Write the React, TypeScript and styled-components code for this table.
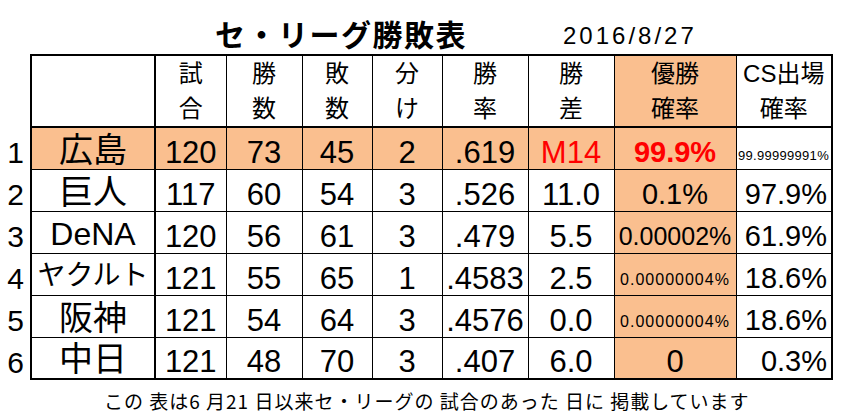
import * as React from 'react';
import styled, { createGlobalStyle } from 'styled-components';

const ORANGE = '#FABF8F';
const LATIN = '"Liberation Sans", "Noto Sans CJK JP", sans-serif';
const CJK = '"Noto Sans CJK JP", "Liberation Sans", sans-serif';

const GlobalStyle = createGlobalStyle`
  html, body {
    margin: 0;
    padding: 0;
    background: #fff;
  }
  body {
    font-family: ${LATIN};
    color: #000;
  }
`;

const Page = styled.div`
  display: flex;
  flex-direction: column;
  width: 843px;
  height: 417px;
  overflow: hidden;
  background: #fff;
`;

const TitleBar = styled.div`
  display: flex;
  align-items: flex-end;
  height: 54px;
  box-sizing: border-box;
  padding: 0 0 4px 215px;
`;

const Title = styled.h1`
  margin: 0;
  font-family: ${CJK};
  font-weight: 700;
  font-size: 30px;
  line-height: 34px;
  letter-spacing: 1.5px;
`;

const DateText = styled.span`
  margin-left: 96px;
  font-size: 24px;
  line-height: 28px;
  letter-spacing: 3px;
`;

const Standings = styled.table`
  border-collapse: collapse;
  table-layout: fixed;
  width: 832px;
`;

const HeadCell = styled.th<{ $hl?: boolean; $thick?: boolean }>`
  height: 70px;
  padding: 0;
  border: 1px solid #000;
  border-top-width: 2px;
  border-bottom-width: 2px;
  ${p => (p.$thick ? 'border-left-width: 2px; border-right-width: 2px;' : '')}
  &:last-child {
    border-right-width: 2px;
  }
  background: ${p => (p.$hl ? ORANGE : '#fff')};
  font-family: ${LATIN};
  font-weight: 400;
  font-size: 24px;
  line-height: 35px;
  text-align: center;
  vertical-align: middle;
`;

const Blank = styled.th`
  border: none;
  padding: 0;
`;

const Rank = styled.td`
  border: none;
  padding: 8px 6px 0 0;
  height: 34px;
  font-size: 30px;
  line-height: 31px;
  text-align: right;
  vertical-align: middle;
`;

const Team = styled.td<{ $hl?: boolean; $size?: number; $last?: boolean }>`
  border: 1px solid #000;
  border-left-width: 2px;
  border-right-width: 2px;
  ${p => (p.$last ? 'border-bottom-width: 2px;' : '')}
  padding: 3px 0 0;
  background: ${p => (p.$hl ? ORANGE : '#fff')};
  font-family: ${LATIN};
  font-size: ${p => p.$size ?? 34}px;
  line-height: 34px;
  text-align: center;
  vertical-align: middle;
  white-space: nowrap;
`;

const Cell = styled.td<{
  $hl?: boolean;
  $last?: boolean;
  $red?: boolean;
  $bold?: boolean;
  $size?: number;
  $right?: boolean;
}>`
  border: 1px solid #000;
  ${p => (p.$last ? 'border-bottom-width: 2px;' : '')}
  &:last-child {
    border-right-width: 2px;
  }
  padding: 8px ${p => (p.$right ? '4px' : '0')} 0 0;
  background: ${p => (p.$hl ? ORANGE : '#fff')};
  color: ${p => (p.$red ? '#FF0000' : '#000')};
  font-weight: ${p => (p.$bold ? 700 : 400)};
  font-size: ${p => p.$size ?? 31}px;
  line-height: 31px;
  text-align: ${p => (p.$right ? 'right' : 'center')};
  vertical-align: middle;
  white-space: nowrap;
`;

const Tiny = styled.td<{ $hl?: boolean; $size: number; $spacing: number; $right?: boolean; $last?: boolean }>`
  border: 1px solid #000;
  ${p => (p.$last ? 'border-bottom-width: 2px;' : '')}
  &:last-child {
    border-right-width: 2px;
  }
  padding: 0 ${p => (p.$right ? '2px' : '0')} 7px 0;
  background: ${p => (p.$hl ? ORANGE : '#fff')};
  font-size: ${p => p.$size}px;
  line-height: ${p => p.$size}px;
  letter-spacing: ${p => p.$spacing}px;
  text-align: ${p => (p.$right ? 'right' : 'center')};
  vertical-align: bottom;
  white-space: nowrap;
`;

const Footer = styled.p`
  margin: 0;
  padding: 9px 0 0 104px;
  font-family: ${CJK};
  font-size: 19px;
  line-height: 24px;
  letter-spacing: 1px;
  white-space: nowrap;
`;

type Prob =
  | { kind: 'text'; text: string; size?: number; red?: boolean; bold?: boolean }
  | { kind: 'tiny'; text: string; size: number; spacing: number };

interface Row {
  team: string;
  teamSize?: number;
  games: number;
  wins: number;
  losses: number;
  ties: number;
  pct: string;
  gb: string;
  gbRed?: boolean;
  win: Prob;
  cs: Prob;
}

const rows: Row[] = [
  {
    team: '広島', games: 120, wins: 73, losses: 45, ties: 2, pct: '.619', gb: 'M14', gbRed: true,
    win: { kind: 'text', text: '99.9%', size: 29, red: true, bold: true },
    cs: { kind: 'tiny', text: '99.99999991%', size: 13, spacing: 0.3 },
  },
  {
    team: '巨人', games: 117, wins: 60, losses: 54, ties: 3, pct: '.526', gb: '11.0',
    win: { kind: 'text', text: '0.1%', size: 29 },
    cs: { kind: 'text', text: '97.9%', size: 29 },
  },
  {
    team: 'DeNA', teamSize: 32, games: 120, wins: 56, losses: 61, ties: 3, pct: '.479', gb: '5.5',
    win: { kind: 'text', text: '0.00002%', size: 25 },
    cs: { kind: 'text', text: '61.9%', size: 29 },
  },
  {
    team: 'ヤクルト', teamSize: 28, games: 121, wins: 55, losses: 65, ties: 1, pct: '.4583', gb: '2.5',
    win: { kind: 'tiny', text: '0.00000004%', size: 16, spacing: 1 },
    cs: { kind: 'text', text: '18.6%', size: 29 },
  },
  {
    team: '阪神', games: 121, wins: 54, losses: 64, ties: 3, pct: '.4576', gb: '0.0',
    win: { kind: 'tiny', text: '0.00000004%', size: 16, spacing: 1 },
    cs: { kind: 'text', text: '18.6%', size: 29 },
  },
  {
    team: '中日', games: 121, wins: 48, losses: 70, ties: 3, pct: '.407', gb: '6.0',
    win: { kind: 'text', text: '0' },
    cs: { kind: 'text', text: '0.3%', size: 29 },
  },
];

const widths = [31, 124, 71, 76, 70, 70, 86, 86, 122, 96];

const ProbCell: React.FC<{ p: Prob; hl?: boolean; right?: boolean; last?: boolean }> = ({ p, hl, right, last }) =>
  p.kind === 'tiny' ? (
    <Tiny $hl={hl} $size={p.size} $spacing={p.spacing} $right={right} $last={last}>
      {p.text}
    </Tiny>
  ) : (
    <Cell $hl={hl} $right={right} $last={last} $size={p.size} $red={p.red} $bold={p.bold}>
      {p.text}
    </Cell>
  );

const App: React.FC = () => (
  <Page>
    <GlobalStyle />
    <TitleBar>
      <Title>セ・リーグ勝敗表</Title>
      <DateText>2016/8/27</DateText>
    </TitleBar>
    <Standings>
      <colgroup>
        {widths.map((w, i) => (
          <col key={i} style={{ width: w }} />
        ))}
      </colgroup>
      <thead>
        <tr>
          <Blank />
          <HeadCell $thick />
          <HeadCell>試<br />合</HeadCell>
          <HeadCell>勝<br />数</HeadCell>
          <HeadCell>敗<br />数</HeadCell>
          <HeadCell>分<br />け</HeadCell>
          <HeadCell>勝<br />率</HeadCell>
          <HeadCell>勝<br />差</HeadCell>
          <HeadCell $hl>優勝<br />確率</HeadCell>
          <HeadCell>CS出場<br />確率</HeadCell>
        </tr>
      </thead>
      <tbody>
        {rows.map((r, i) => {
          const first = i === 0;
          const last = i === rows.length - 1;
          return (
            <tr key={r.team}>
              <Rank>{i + 1}</Rank>
              <Team $hl={first} $last={last} $size={r.teamSize}>{r.team}</Team>
              <Cell $hl={first} $last={last}>{r.games}</Cell>
              <Cell $hl={first} $last={last}>{r.wins}</Cell>
              <Cell $hl={first} $last={last}>{r.losses}</Cell>
              <Cell $hl={first} $last={last}>{r.ties}</Cell>
              <Cell $hl={first} $last={last}>{r.pct}</Cell>
              <Cell $hl={first} $last={last} $red={r.gbRed}>{r.gb}</Cell>
              <ProbCell p={r.win} hl last={last} />
              <ProbCell p={r.cs} right last={last} />
            </tr>
          );
        })}
      </tbody>
    </Standings>
    <Footer>この 表は6 月21 日以来セ・リーグの 試合のあった 日に 掲載しています</Footer>
  </Page>
);

export default App;
